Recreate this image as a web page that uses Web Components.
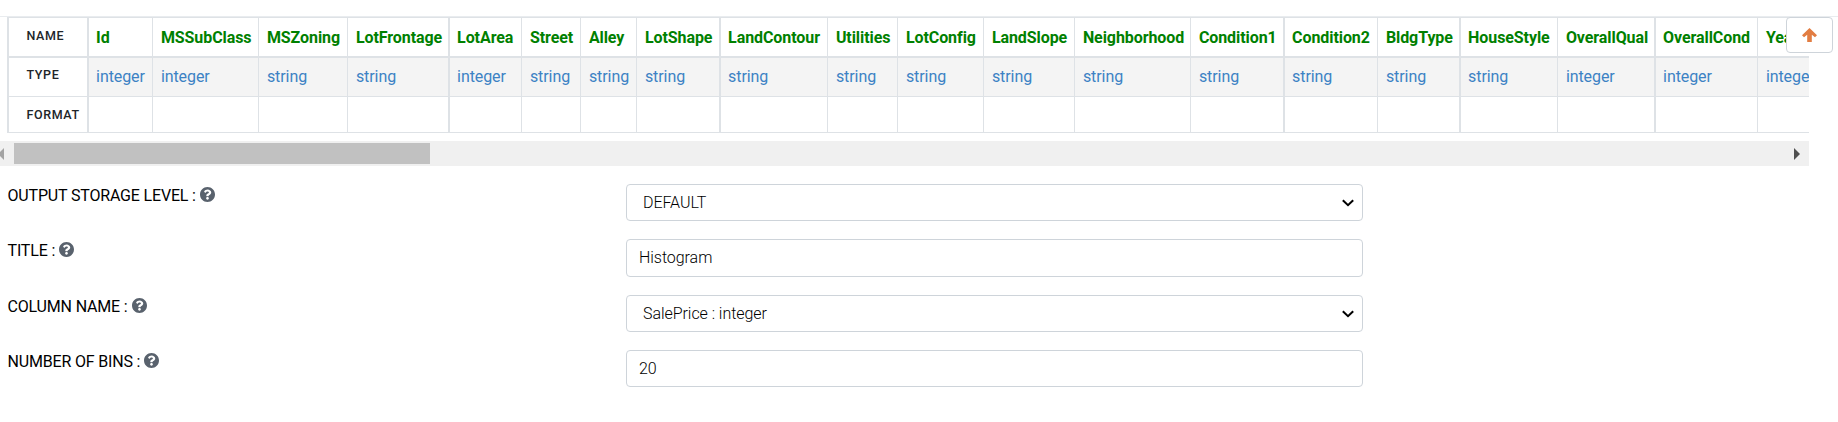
<!DOCTYPE html>
<html lang="en">
<head>
<meta charset="utf-8">
<title>Histogram</title>
<style>
html,body{margin:0;padding:0;background:#fff;overflow:hidden}
body{height:422px;font-family:Roboto,"Liberation Sans",sans-serif;font-size:16px}
</style>
</head>
<body>
<histogram-settings></histogram-settings>
<script>
const define = (name, html, setup) => customElements.define(name, class extends HTMLElement {
  constructor() {
    super();
    this.attachShadow({ mode: "open" }).innerHTML = html;
  }
  connectedCallback() { if (setup) setup(this, this.shadowRoot); }
});

define("help-icon", `<style>
:host{display:block;width:15px;height:15px}svg{display:block}
</style><svg width="15" height="15" viewBox="8 8 496 496"><path fill="#59626d" d="M504 256c0 136.997-111.043 248-248 248S8 392.997 8 256C8 119.083 119.043 8 256 8s248 111.083 248 248zM262.655 90c-54.497 0-89.255 22.957-116.549 63.758-3.536 5.286-2.353 12.415 2.715 16.258l34.699 26.31c5.205 3.947 12.621 3.008 16.665-2.122 17.864-22.658 30.113-35.797 57.303-35.797 20.429 0 45.698 13.148 45.698 32.958 0 14.976-12.363 22.667-32.534 33.976C247.128 238.528 216 254.941 216 296v4c0 6.627 5.373 12 12 12h56c6.627 0 12-5.373 12-12v-1.333c0-28.462 83.186-29.647 83.186-106.667 0-58.002-60.165-102-116.531-102zM256 338c-25.365 0-46 20.635-46 46 0 25.364 20.635 46 46 46s46-20.636 46-46c0-25.364-20.635-46-46-46z"/></svg>`);

define("scroll-top-button", `<style>
:host{display:flex;box-sizing:border-box;width:47px;height:36px;border:1px solid #ced4da;border-radius:4px;background:#fff;justify-content:center;align-items:center}
svg{display:block;margin-bottom:1px}
</style><svg width="15" height="14" viewBox="0 0 15 14"><path fill="#e27d42" d="M7.500 0 15 7.300 13 9.200 9.800 6.700V14H5.200V6.700L2 9.200 0 7.300z"/></svg>`);

define("schema-table", `<style>
:host{display:block;height:116px;overflow:hidden;padding-left:7px;box-sizing:border-box}
.grid{display:grid;grid-template-rows:41px 39px 36px;width:max-content;letter-spacing:-.08px}
.grid>div{box-sizing:border-box;border:0 solid #dee2e6;border-left-width:1px;border-bottom-width:1px;white-space:nowrap;line-height:24px;padding:8px 0 0 7.9px;overflow:hidden}
.grid>.thick{border-left-width:2px;padding-left:7.1px}
.grid>.name{border-top-width:1px;border-bottom-width:2px;color:green;font-weight:700}
.grid>.type{background:#f4f4f4;color:#3c82c4;padding-top:7px}
.grid>.head{border-left-width:2px;background:#fff;color:#212529;font-size:12.5px;font-weight:500;letter-spacing:.6px;padding:6px 0 0 17.5px}
.grid>.head.type{padding-top:5px}
</style><div class="grid"></div>`, (el, root) => {
  const cols = [["Id",65,1,1],["MSSubClass",106,0,1],["MSZoning",89],["LotFrontage",101],["LotArea",73,1,1],["Street",59],["Alley",56],["LotShape",83],["LandContour",108,1],["Utilities",70],["LotConfig",86],["LandSlope",91],["Neighborhood",116],["Condition1",93],["Condition2",94,1],["BldgType",82],["HouseStyle",98,1],["OverallQual",97,0,1],["OverallCond",103,1,1],["YearBuilt",90,0,1]];
  const grid = root.querySelector(".grid");
  grid.style.gridTemplateColumns = "80px " + cols.map(c => c[1] + "px").join(" ");
  for (const row of ["name", "type", "format"]) {
    grid.insertAdjacentHTML("beforeend", `<div class="head ${row}">${row.toUpperCase()}</div>` +
      cols.map(c => `<div class="${row}${c[2] ? " thick" : ""}">${row === "name" ? c[0] : row === "type" ? (c[3] ? "integer" : "string") : ""}</div>`).join(""));
  }
});

define("scroll-track", `<style>
:host{display:flex;height:25px;background:#f0f0f0;align-items:center}
i{width:416px;height:21px;background:#c1c1c1;margin:0 auto 0 10px}
svg{display:block}.r{margin-right:9px}
</style><svg width="4" height="12"><path fill="#a3a3a3" d="M4 0v12L-2 6z"/></svg><i></i><svg class="r" width="6" height="12"><path fill="#505050" d="M0 0v12L6 6z"/></svg>`);

define("form-row", `<style>
:host{display:grid;grid-template-columns:618.500px 737px;height:var(--row,55px)}
.label{display:flex;align-items:flex-start;color:#000;line-height:24px;white-space:pre;letter-spacing:-.17px}
help-icon{margin:3px 0 0 4px}
</style><div class="label"><span class="text"></span><help-icon></help-icon></div><slot></slot>`, (el, root) => {
  root.querySelector(".text").textContent = el.getAttribute("label") + " :";
});

define("form-field", `<style>
:host{display:flex;align-items:center;box-sizing:border-box;height:var(--h,37px);border:1px solid #ced4da;border-radius:4px;padding:0 8px var(--pb,0) 12px;font-weight:300;letter-spacing:-.05px;color:#000;background:#fff}
:host([select]){padding-left:16px}
svg{display:none;margin-left:auto}
:host([select]) svg{display:block}
</style><slot></slot><svg width="12" height="8" viewBox="0 0 12 8"><path d="M.8 1.2 6 6.200l5.200-5" fill="none" stroke="#000" stroke-width="2"/></svg>`);

define("histogram-settings", `<style>
:host{display:block;position:relative;height:422px;padding-top:16px;box-sizing:border-box}
.line{height:1px;background:#e9ecef}
schema-table,scroll-track{width:1809px}
scroll-track{margin-top:8px}
.form{padding:18px 0 0 7.5px}
scroll-top-button{position:absolute;left:1786px;top:17px}
</style><div class="line"></div><schema-table></schema-table><scroll-track></scroll-track>
<div class="form">
<form-row label="OUTPUT STORAGE LEVEL"><form-field select>DEFAULT</form-field></form-row>
<form-row label="TITLE" style="--row:56px"><form-field style="--h:38px;--pb:2px">Histogram</form-field></form-row>
<form-row label="COLUMN NAME"><form-field select>SalePrice : integer</form-field></form-row>
<form-row label="NUMBER OF BINS"><form-field>20</form-field></form-row>
</div><scroll-top-button></scroll-top-button>`);
</script>
</body>
</html>
